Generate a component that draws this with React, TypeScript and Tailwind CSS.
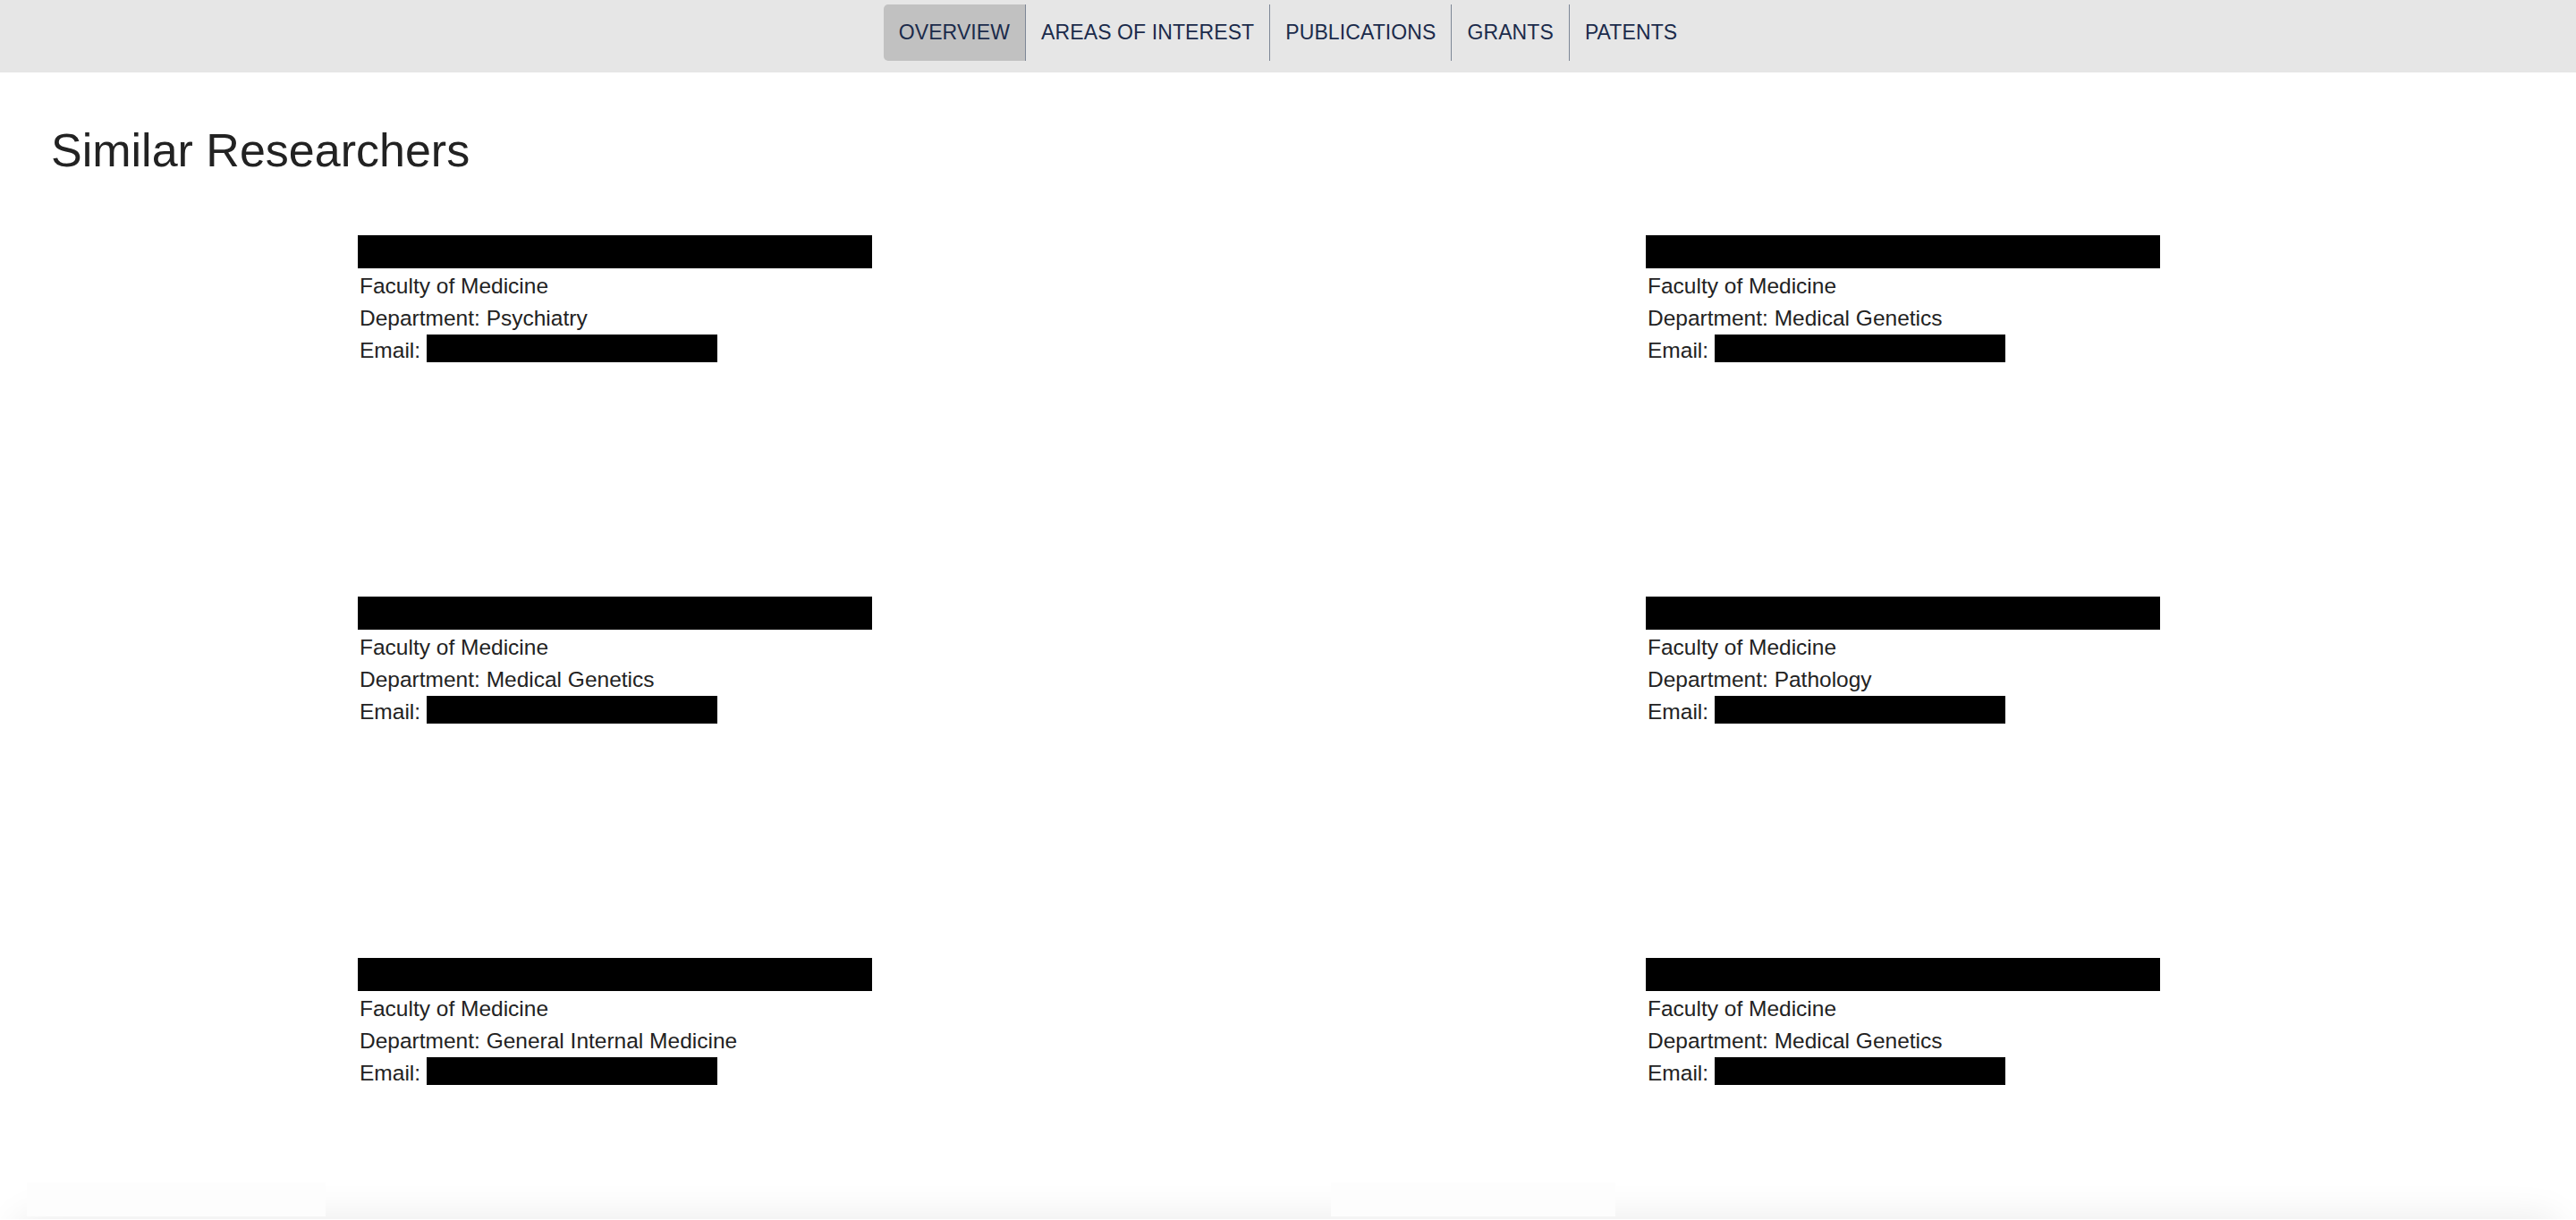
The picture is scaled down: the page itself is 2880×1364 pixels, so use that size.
import React from "react";

type Researcher = {
  faculty: string;
  department: string;
};

const NAV_ITEMS = ["OVERVIEW", "AREAS OF INTEREST", "PUBLICATIONS", "GRANTS", "PATENTS"];

const researchers: Researcher[] = [
  { faculty: "Faculty of Medicine", department: "Psychiatry" },
  { faculty: "Faculty of Medicine", department: "Medical Genetics" },
  { faculty: "Faculty of Medicine", department: "Medical Genetics" },
  { faculty: "Faculty of Medicine", department: "Pathology" },
  { faculty: "Faculty of Medicine", department: "General Internal Medicine" },
  { faculty: "Faculty of Medicine", department: "Medical Genetics" },
];

function NavBar() {
  return (
    <nav className="flex h-[81px] justify-center bg-[#e6e6e6] pt-[5px]">
      {NAV_ITEMS.map((item, i) => (
        <div
          key={item}
          className={`flex h-[63px] items-center px-[17px] text-[23px] tracking-[0.1px] text-[#1b2b4b] ${
            i === 0 ? "rounded-l-[5px] bg-[#c1c1c1]" : ""
          } ${i < NAV_ITEMS.length - 1 ? "border-r border-[#7d8796]" : ""}`}
        >
          {item}
        </div>
      ))}
    </nav>
  );
}

function ResearcherCard({ researcher }: { researcher: Researcher }) {
  return (
    <div className="w-[640px] text-[24.5px] leading-[36px] text-[#222222]">
      <div className="mb-[2px] h-[37px] w-[575px] bg-black" />
      <div className="pl-[2px]">{researcher.faculty}</div>
      <div className="pl-[2px]">Department: {researcher.department}</div>
      <div className="flex items-start pl-[2px]">
        <span>Email:&nbsp;</span>
        <span className="inline-block h-[31px] w-[325px] bg-black" />
      </div>
    </div>
  );
}

export default function App() {
  return (
    <div className="min-h-screen overflow-hidden bg-white font-['Liberation_Sans',Arial,sans-serif]">
      <NavBar />

      <main>
        <h1 className="mt-[57px] pl-[57px] text-[52px] leading-[60px] text-[#222222]">
          Similar Researchers
        </h1>

        <div className="mt-[65px] grid grid-cols-2 gap-y-[257px]">
          {researchers.map((r, i) => (
            <div key={i} className="flex justify-center">
              <ResearcherCard researcher={r} />
            </div>
          ))}
        </div>
      </main>

      <div className="relative mt-[97px] h-[48px] overflow-hidden">
        <div className="absolute left-[16px] right-[16px] top-[48px] h-[200px] rounded-[24px] bg-white shadow-[0_-4px_40px_rgba(0,0,0,0.08)]" />
        <div className="relative flex h-full items-end pb-[3px]">
          <div className="ml-[30px] h-[38px] w-[334px] bg-[#fdfdfd]" />
          <div className="ml-[1124px] h-[38px] w-[318px] bg-[#fdfdfd]" />
        </div>
      </div>
    </div>
  );
}
